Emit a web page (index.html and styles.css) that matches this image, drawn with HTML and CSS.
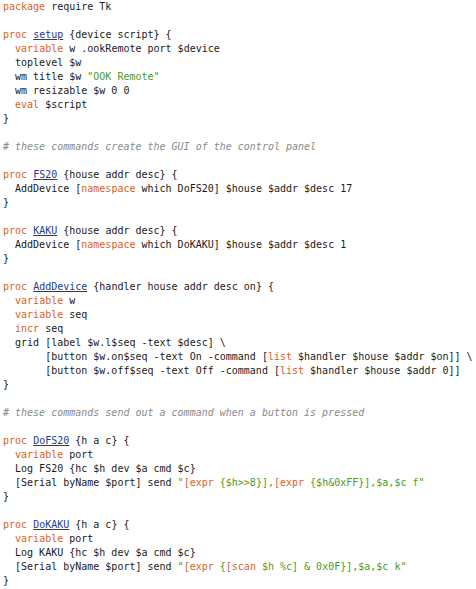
FILE: index.html
```html
<!DOCTYPE html>
<html>
<head>
<meta charset="utf-8">
<link rel="stylesheet" href="styles.css">
</head>
<body>
<pre class="code"><span class="k">package</span> require Tk

<span class="k">proc</span> <span class="n">setup</span> {device script} {
  <span class="k">variable</span> w .ookRemote port $device
  toplevel $w
  wm title $w <span class="s">"OOK Remote"</span>
  wm resizable $w 0 0
  <span class="k">eval</span> $script
}

<span class="c"># these commands create the GUI of the control panel</span>

<span class="k">proc</span> <span class="n">FS20</span> {house addr desc} {
  AddDevice [<span class="k">namespace</span> which DoFS20] $house $addr $desc 17
}

<span class="k">proc</span> <span class="n">KAKU</span> {house addr desc} {
  AddDevice [<span class="k">namespace</span> which DoKAKU] $house $addr $desc 1
}

<span class="k">proc</span> <span class="n">AddDevice</span> {handler house addr desc on} {
  <span class="k">variable</span> w
  <span class="k">variable</span> seq
  <span class="k">incr</span> seq
  grid [label $w.l$seq -text $desc] \
       [button $w.on$seq -text On -command [<span class="k">list</span> $handler $house $addr $on]] \
       [button $w.off$seq -text Off -command [<span class="k">list</span> $handler $house $addr 0]]
}

<span class="c"># these commands send out a command when a button is pressed</span>

<span class="k">proc</span> <span class="n">DoFS20</span> {h a c} {
  <span class="k">variable</span> port
  Log FS20 {hc $h dev $a cmd $c}
  [Serial byName $port] send <span class="s">"<span class="k">[expr</span> {$h&gt;&gt;8}],<span class="k">[expr</span> {$h&amp;0xFF}],$a,$c f"</span>
}

<span class="k">proc</span> <span class="n">DoKAKU</span> {h a c} {
  <span class="k">variable</span> port
  Log KAKU {hc $h dev $a cmd $c}
  [Serial byName $port] send <span class="s">"<span class="k">[expr</span> {<span class="k">[scan</span> $h %c] &amp; 0x0F}],$a,$c k"</span>
}</pre>
</body>
</html>
```
FILE: styles.css
```css
html, body {
  margin: 0;
  padding: 0;
  background: #ffffff;
}
.code {
  margin: 0;
  padding: 0 0 0 3px;
  font-family: "DejaVu Sans Mono", monospace;
  font-size: 10px;
  line-height: 14px;
  color: #1a1a1a;
}
.k {
  color: #d5642a;
}
.s {
  color: #4c9a2a;
}
.c {
  color: #8a8a8a;
  font-style: italic;
}
.n {
  color: #1d3b8c;
  text-decoration: underline;
}
```
